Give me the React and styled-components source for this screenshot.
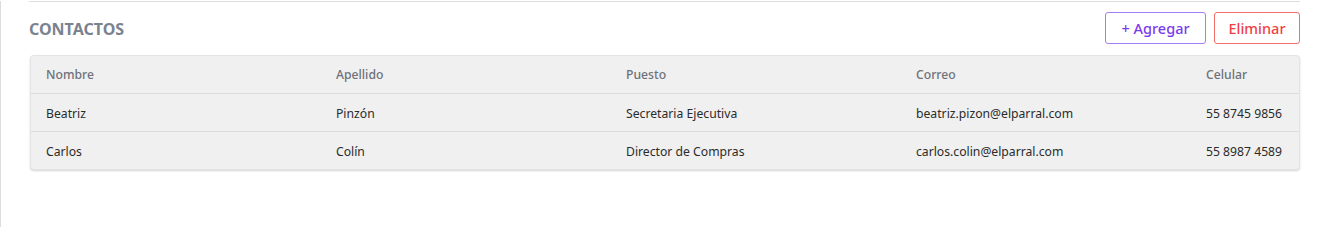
import React from "react";
import styled, { createGlobalStyle } from "styled-components";

const Global = createGlobalStyle`
  html, body { margin: 0; padding: 0; background: #fff; }
  body { font-family: "Segoe UI", "Noto Sans", "Open Sans", sans-serif; }
`;

const Page = styled.div`
  height: 227px;
  border-left: 1px solid #dcdcdc;
  box-sizing: border-box;
  padding: 0 28px 0 28px;
`;

const Section = styled.section`
  border-top: 1px solid #dedede;
  margin-top: 1px;
`;

const Header = styled.div`
  display: flex;
  align-items: center;
  justify-content: space-between;
  height: 53px;
  box-sizing: border-box;
  padding-bottom: 2px;
`;

const Title = styled.h2`
  margin: 0;
  padding-top: 2px;
  font-size: 16px;
  font-weight: 700;
  color: #7b828f;
  letter-spacing: 0;
`;

const Actions = styled.div`
  display: flex;
  gap: 8px;
`;

const Button = styled.button`
  height: 32px;
  width: ${(p) => p.$w}px;
  padding: 0;
  background: #fff;
  border: 1px solid ${(p) => p.$border};
  color: ${(p) => p.$color};
  border-radius: 3px;
  font-family: inherit;
  font-size: 14.5px;
  font-weight: 500;
  cursor: pointer;
`;

const Table = styled.div`
  background: #f0f0f0;
  border-radius: 4px;
  box-shadow: 0 1px 2px rgba(0, 0, 0, 0.18);
  border: 1px solid #e4e4e4;
  margin-left: 1px;
`;

const Row = styled.div`
  display: grid;
  grid-template-columns: 290px 290px 290px 290px 1fr;
  padding: ${(p) => (p.$head ? "0" : "1px")} 16px 0 15px;
  box-sizing: border-box;
  height: 37px;
  align-items: center;
  font-size: 12.2px;
  color: ${(p) => (p.$head ? "#6e7179" : "#2b2b2b")};
  font-weight: ${(p) => (p.$head ? 500 : 400)};
  & + & {
    border-top: 1px solid #dcdcdc;
    height: 38px;
  }
`;

const Cell = styled.div`
  white-space: nowrap;
`;

const rows = [
  ["Beatriz", "Pinzón", "Secretaria Ejecutiva", "beatriz.pizon@elparral.com", "55 8745 9856"],
  ["Carlos", "Colín", "Director de Compras", "carlos.colin@elparral.com", "55 8987 4589"],
];

export default function App() {
  return (
    <>
      <Global />
      <Page>
        <Section>
          <Header>
            <Title>CONTACTOS</Title>
            <Actions>
              <Button $border="#a47cf5" $color="#7c3aed" $w={101}>+ Agregar</Button>
              <Button $border="#f46c6c" $color="#ef3f45" $w={86}>Eliminar</Button>
            </Actions>
          </Header>
          <Table>
            <Row $head>
              {["Nombre", "Apellido", "Puesto", "Correo", "Celular"].map((h) => (
                <Cell key={h}>{h}</Cell>
              ))}
            </Row>
            {rows.map((r) => (
              <Row key={r[0]}>
                {r.map((c) => (
                  <Cell key={c}>{c}</Cell>
                ))}
              </Row>
            ))}
          </Table>
        </Section>
      </Page>
    </>
  );
}
